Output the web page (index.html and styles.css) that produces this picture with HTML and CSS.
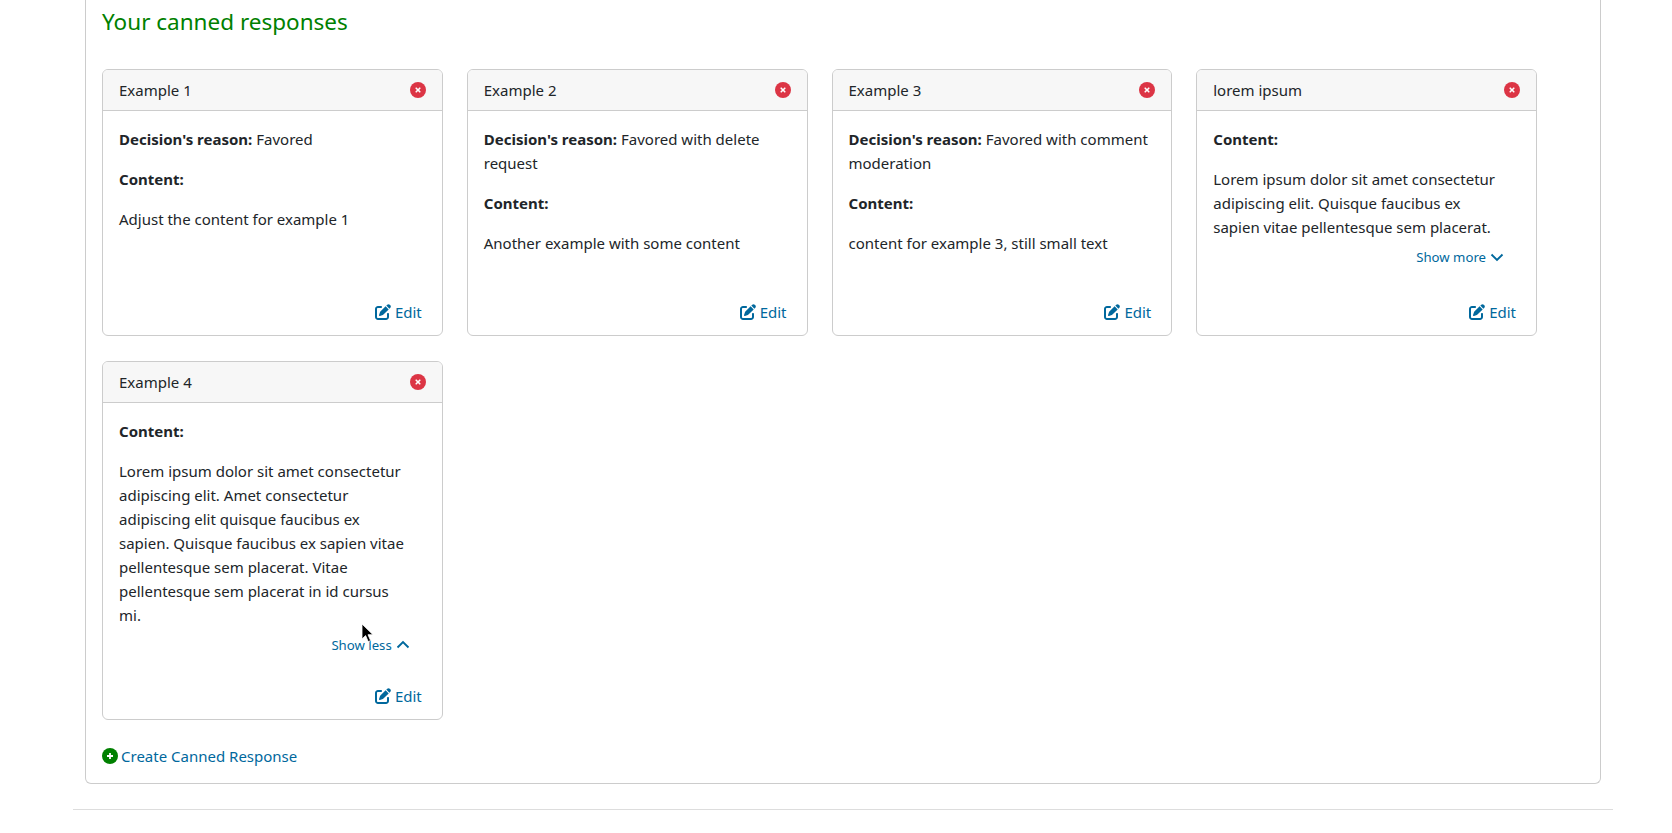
FILE: index.html
```html
<!DOCTYPE html>
<html lang="en">
<head>
<meta charset="utf-8">
<title>Canned responses</title>
<link rel="stylesheet" href="styles.css">
</head>
<body>
<svg class="defs" width="0" height="0" aria-hidden="true">
  <symbol id="i-edit" viewBox="0 0 512 512"><path fill="currentColor" d="M471.6 21.7c-21.9-21.9-57.3-21.9-79.2 0L362.3 51.7l97.9 97.9 30.1-30.1c21.9-21.9 21.9-57.3 0-79.2L471.6 21.7zm-299.2 220c-6.1 6.1-10.8 13.6-13.5 21.9l-29.6 88.8c-2.9 8.6-.6 18.1 5.8 24.6s15.9 8.7 24.6 5.8l88.8-29.6c8.2-2.7 15.7-7.4 21.9-13.5L437.7 172.3 339.7 74.3 172.4 241.7zM96 64C43 64 0 107 0 160V416c0 53 43 96 96 96H352c53 0 96-43 96-96V320c0-17.7-14.3-32-32-32s-32 14.3-32 32v96c0 17.7-14.3 32-32 32H96c-17.7 0-32-14.3-32-32V160c0-17.7 14.3-32 32-32h96c17.7 0 32-14.3 32-32s-14.3-32-32-32H96z"/></symbol>
  <symbol id="i-close" viewBox="0 0 16 16"><circle cx="8" cy="8" r="8" fill="#dc3545"/><path d="M6.2 6.2l3.6 3.6M9.8 6.2l-3.6 3.6" stroke="#fff" stroke-width="1.6" stroke-linecap="round"/></symbol>
  <symbol id="i-plus" viewBox="0 0 16 16"><circle cx="8" cy="8" r="8" fill="#008000"/><path d="M8 5v6M5 8h6" stroke="#fff" stroke-width="1.8"/></symbol>
  <symbol id="i-down" viewBox="0 0 14 10"><path d="M1.5 2.5L7 8l5.5-5.5" fill="none" stroke="currentColor" stroke-width="1.9"/></symbol>
  <symbol id="i-up" viewBox="0 0 14 10"><path d="M1.5 7.5L7 2l5.5 5.5" fill="none" stroke="currentColor" stroke-width="1.9"/></symbol>
</svg>
<main class="page">
  <section class="panel">
    <h2 class="title">Your canned responses</h2>
    <div class="grid">
      <article class="card">
        <header class="card-head"><span>Example 1</span><svg class="ic-close"><use href="#i-close"/></svg></header>
        <div class="card-body">
          <p><b>Decision's reason:</b> Favored</p>
          <p><b>Content:</b></p>
          <p>Adjust the content for example 1</p>
          <a class="edit" href="#"><svg class="ic-edit"><use href="#i-edit"/></svg> Edit</a>
        </div>
      </article>
      <article class="card">
        <header class="card-head"><span>Example 2</span><svg class="ic-close"><use href="#i-close"/></svg></header>
        <div class="card-body">
          <p><b>Decision's reason:</b> Favored with delete<br>request</p>
          <p><b>Content:</b></p>
          <p>Another example with some content</p>
          <a class="edit" href="#"><svg class="ic-edit"><use href="#i-edit"/></svg> Edit</a>
        </div>
      </article>
      <article class="card">
        <header class="card-head"><span>Example 3</span><svg class="ic-close"><use href="#i-close"/></svg></header>
        <div class="card-body">
          <p><b>Decision's reason:</b> Favored with comment<br>moderation</p>
          <p><b>Content:</b></p>
          <p>content for example 3, still small text</p>
          <a class="edit" href="#"><svg class="ic-edit"><use href="#i-edit"/></svg> Edit</a>
        </div>
      </article>
      <article class="card">
        <header class="card-head"><span>lorem ipsum</span><svg class="ic-close"><use href="#i-close"/></svg></header>
        <div class="card-body">
          <p><b>Content:</b></p>
          <p class="long">Lorem ipsum dolor sit amet consectetur<br>adipiscing elit. Quisque faucibus ex<br>sapien vitae pellentesque sem placerat.</p>
          <a class="toggle" href="#">Show more <svg class="ic-chev"><use href="#i-down"/></svg></a>
          <a class="edit" href="#"><svg class="ic-edit"><use href="#i-edit"/></svg> Edit</a>
        </div>
      </article>
      <article class="card">
        <header class="card-head"><span>Example 4</span><svg class="ic-close"><use href="#i-close"/></svg></header>
        <div class="card-body">
          <p><b>Content:</b></p>
          <p class="long">Lorem ipsum dolor sit amet consectetur<br>adipiscing elit. Amet consectetur<br>adipiscing elit quisque faucibus ex<br>sapien. Quisque faucibus ex sapien vitae<br>pellentesque sem placerat. Vitae<br>pellentesque sem placerat in id cursus<br>mi.</p>
          <a class="toggle" href="#">Show less <svg class="ic-chev"><use href="#i-up"/></svg></a>
          <a class="edit" href="#"><svg class="ic-edit"><use href="#i-edit"/></svg> Edit</a>
        </div>
      </article>
    </div>
    <a class="create" href="#"><svg class="ic-plus"><use href="#i-plus"/></svg> Create Canned Response</a>
  </section>
  <hr class="rule">
</main>
<svg class="cursor" width="13" height="20" viewBox="0 0 13 20" aria-hidden="true"><path d="M1 1v15l3.6-3.4 2.6 6 2.4-1-2.6-5.9H12z" fill="#000" stroke="#fff" stroke-width="0.8"/></svg>
</body>
</html>
```
FILE: styles.css
```css
* { box-sizing: border-box; }
html, body { margin: 0; height: 833px; overflow: hidden; background: #fff; }
body { font-family: "Noto Sans", sans-serif; font-size: 15px; line-height: 24px; color: #212529; position: relative; }
.defs { position: absolute; }
.page { width: 1540px; margin-left: 73px; }
.panel { margin: 0 12px; padding: 7px 16px 15px; border: 1px solid #ccc; border-top: 0; border-radius: 0 0 6px 6px; height: 784px; }
.title { margin: 0 0 32px; font-size: 22.5px; line-height: 30px; font-weight: 400; color: #008000; }
.grid { display: grid; grid-template-columns: repeat(4, 340.75px); gap: 25px 24px; }
.card { display: flex; flex-direction: column; min-height: 267px; border: 1px solid #ccc; border-radius: 6px; overflow: hidden; }
.card-head { display: flex; align-items: center; justify-content: space-between; height: 41px; padding: 0 16px; background: #f7f7f7; border-bottom: 1px solid #ccc; }
.ic-close { width: 16px; height: 16px; }
.card-body { flex: 1; display: flex; flex-direction: column; padding: 16px 16px 11px; }
.card-body p { margin: 0 0 16px; }
.card-body p.long { margin-bottom: 6px; }
.edit, .toggle, .create { color: #00689d; text-decoration: none; }
.edit { margin-top: auto; align-self: flex-end; margin-right: 4px; display: flex; align-items: center; gap: 4px; }
.ic-edit { width: 16px; height: 16px; }
.toggle { align-self: flex-end; margin-right: 16px; margin-bottom: 27px; font-size: 13.2px; display: flex; align-items: center; gap: 4px; }
.ic-chev { width: 14px; height: 10px; }
.create { display: flex; align-items: center; gap: 3px; margin-top: 24px; }
.ic-plus { width: 16px; height: 16px; }
.rule { margin: 25px 0 0; border: 0; border-top: 1px solid #ddd; }
.cursor { position: absolute; left: 361px; top: 623px; }
```
